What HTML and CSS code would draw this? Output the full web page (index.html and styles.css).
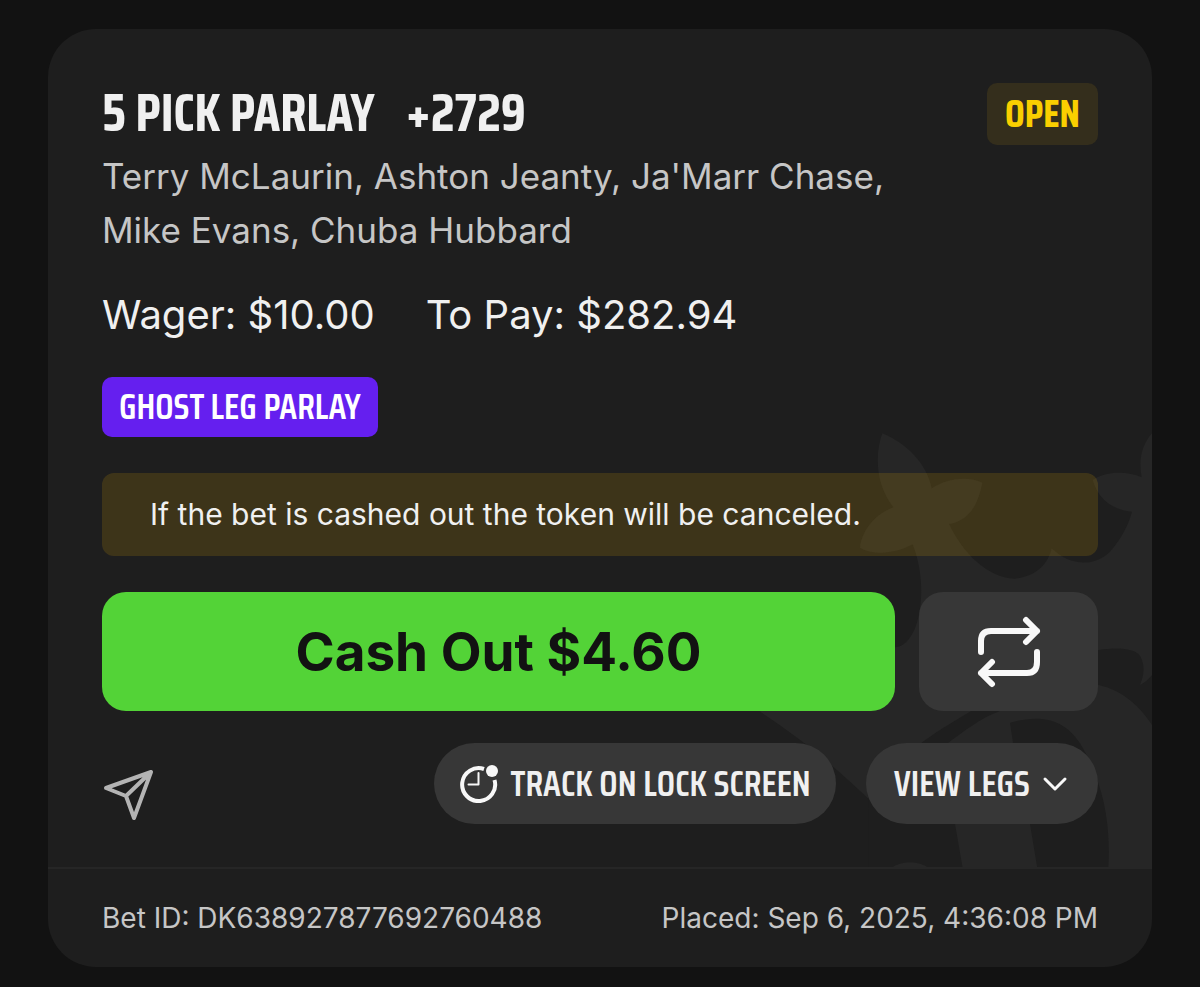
FILE: index.html
```html
<!DOCTYPE html>
<html lang="en">

<head>
    <meta charset="UTF-8">
    <meta name="viewport" content="width=device-width, initial-scale=1.0">
    <title>My Bets</title>
    <link rel="stylesheet" href="styles.css">
</head>

<body>
    <article class="card">
        <!-- Crown logo behind the content -->
        <svg class="watermark" viewBox="0 0 1236 1344" aria-hidden="true">
            <path class="light" d="M427 40C500 70 560 130 575 205C630 170 690 170 727 188C715 250 690 302 627 312C670 400 740 472 825 476C890 470 925 430 935 385C990 440 1065 440 1110 395C1145 355 1165 315 1176 275C1120 270 1075 240 1058 180C1090 155 1160 150 1205 172C1195 120 1205 75 1236 40V1344H520L400 1150C290 1045 190 960 60 875L300 682H466C490 680 510 660 525 625C550 560 552 460 518 373C470 400 400 408 360 383C365 335 400 285 460 262C405 190 405 100 427 40Z" />
            <path class="dark" d="M385 1135C430 1060 490 1010 545 968C610 920 650 900 690 875C820 800 950 700 1076 690C1130 682 1180 683 1200 707C1218 740 1210 770 1200 795Q1220 785 1236 765V915C1200 860 1150 812 1076 795C960 785 860 840 775 875C720 895 670 935 625 968C610 1050 635 1130 645 1212L668 1344H385Z" />
            <path class="dark" d="M810 908C890 885 970 890 1020 970C1075 1060 1115 1180 1105 1344H892L870 1212C840 1110 825 1010 810 908Z" />
            <path class="light" d="M455 1344C480 1322 540 1322 565 1344Z" />
        </svg>

        <div class="content">
            <header class="head">
                <h1><span>5 PICK PARLAY</span> <span>+2729</span></h1>
                <span class="status">OPEN</span>
            </header>
            <p class="picks">Terry McLaurin, Ashton Jeanty, Ja'Marr Chase, Mike Evans, Chuba Hubbard</p>
            <p class="amounts"><span>Wager: $10.00</span> <span>To Pay: $282.94</span></p>
            <span class="tag">GHOST LEG PARLAY</span>
            <p class="notice">If the bet is cashed out the token will be canceled.</p>

            <div class="cash">
                <button type="button" class="cash-out">Cash Out $4.60</button>
                <button type="button" class="repeat" aria-label="Repeat bet">
                    <svg width="64" height="72" viewBox="0 0 64 72">
                        <path d="M4 36V25Q4 15 14 15H60M49 4L60 15L49 26M60 36V46Q60 57 50 57H4M15 46L4 57L15 68" />
                    </svg>
                </button>
            </div>

            <div class="actions">
                <button type="button" class="share" aria-label="Share bet">
                    <svg width="52" height="52" viewBox="0 0 52 52">
                        <path d="M49 3L4 19L24 27L32 49ZM49 3L24 27" />
                    </svg>
                </button>
                <button type="button" class="pill">
                    <svg width="40" height="38" viewBox="0 0 40 38">
                        <path class="ring" d="M25 4A16.500 16.500 0 1 0 35.500 15" />
                        <path class="hands" d="M19.500 8V19.500H9.500" />
                        <circle cx="33" cy="6" r="6" />
                    </svg>
                    TRACK ON LOCK SCREEN
                </button>
                <button type="button" class="pill legs">
                    VIEW LEGS
                    <svg width="26" height="16" viewBox="0 0 26 16">
                        <path class="ring" d="M3 3L13 13L23 3" />
                    </svg>
                </button>
            </div>
        </div>

        <footer>
            <span>Bet ID: DK638927877692760488</span>
            <span>Placed: Sep 6, 2025, 4:36:08 PM</span>
        </footer>
    </article>
</body>

</html>
```

FILE: styles.css
```css
* {
    box-sizing: border-box;
}

body {
    margin: 0;
    padding: 29px 48px 20px;
    background-color: #121212;
    color: #f0f0f0;
    font-family: Inter, "Liberation Sans", sans-serif;
}

h1,
p {
    margin: 0;
}

.card {
    position: relative;
    overflow: hidden;
    border-radius: 48px;
    background-color: #1e1e1e;
}

/* Logo */
.watermark {
    position: absolute;
    right: 0;
    bottom: 99px;
    width: 412px;
}

.light {
    fill: #262626;
}

.dark {
    fill: #1e1e1e;
}

.content {
    position: relative;
    padding: 54px 54px 43px;
}

/* Condensed caps */
h1,
.status,
.tag,
.pill {
    font-family: "Saira Condensed", "Liberation Sans Narrow", "Liberation Sans", sans-serif;
    font-weight: 700;
    white-space: nowrap;
}

.head {
    display: flex;
    justify-content: space-between;
}

h1 {
    display: flex;
    gap: 31px;
    font-size: 53px;
    line-height: 60px;
}

.status {
    padding: 0 18px;
    border-radius: 10px;
    background-color: #342e1c;
    color: #facf00;
    font-size: 39px;
    line-height: 62px;
}

.picks {
    max-width: 820px;
    margin-top: 4px;
    color: #c6c6c6;
    font-size: 35px;
    line-height: 54px;
}

.amounts {
    display: flex;
    gap: 51px;
    margin: 31px 0 35px;
    font-size: 40px;
    line-height: 54px;
}

.tag {
    display: inline-block;
    padding: 0 17px;
    border-radius: 10px;
    background-color: #651fef;
    color: #fff;
    font-size: 36px;
    font-weight: 600;
    line-height: 60px;
}

.notice {
    margin: 36px 0;
    padding: 0 48px;
    border-radius: 12px;
    background-color: rgba(255, 190, 0, 0.14);
    font-size: 30px;
    line-height: 83px;
}

/* Buttons */
button {
    padding: 0;
    border: 0;
    color: #f0f0f0;
    cursor: pointer;
}

svg {
    fill: none;
    stroke-linecap: round;
    stroke-linejoin: round;
}

.cash {
    display: grid;
    grid-template-columns: 1fr 179px;
    gap: 24px;
}

.cash button {
    height: 119px;
    border-radius: 24px;
}

.cash-out {
    background-color: #53d337;
    color: #121212;
    font-family: inherit;
    font-size: 53px;
    font-weight: 700;
}

.repeat {
    display: flex;
    align-items: center;
    justify-content: center;
    background-color: #373737;
}

.repeat svg {
    stroke: #f8f8f8;
    stroke-width: 6px;
}

.actions {
    display: flex;
    gap: 30px;
    margin-top: 32px;
}

.share {
    display: flex;
    align-items: flex-end;
    margin-right: auto;
    padding-bottom: 3px;
    background: none;
}

.share svg {
    stroke: #b4b4b4;
    stroke-width: 4px;
}

.pill {
    display: flex;
    align-items: center;
    gap: 12px;
    height: 81px;
    padding: 0 25px;
    border-radius: 41px;
    background-color: #373737;
    font-size: 36px;
    font-weight: 600;
}

.legs {
    padding: 0 30px 0 28px;
}

.ring,
.hands {
    stroke: #f8f8f8;
    stroke-width: 4px;
}

.ring {
    stroke-linecap: butt;
}

.legs .ring {
    stroke-width: 3px;
    stroke-linecap: round;
}

.hands {
    stroke-width: 2px;
}

.pill circle {
    fill: #f8f8f8;
}

footer {
    position: relative;
    display: flex;
    justify-content: space-between;
    padding: 0 54px;
    border-top: 2px solid #262626;
    color: #c6c6c6;
    font-size: 28px;
    line-height: 98px;
}
```
